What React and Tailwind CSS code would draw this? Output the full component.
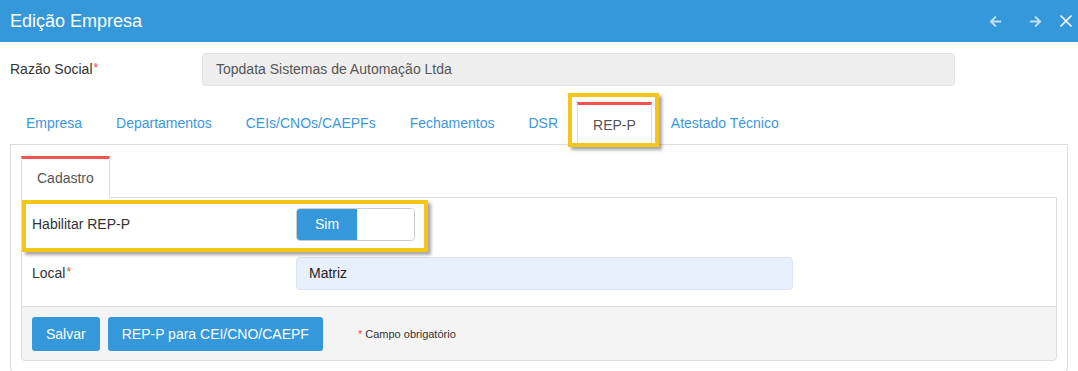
import { FaArrowLeft, FaArrowRight } from 'react-icons/fa';

const tabs = ['Empresa', 'Departamentos', 'CEIs/CNOs/CAEPFs', 'Fechamentos', 'DSR', 'REP-P', 'Atestado Técnico'];

function Highlight({ className }) {
    return (
        <div className={`absolute border-[4px] border-[#f5c518] shadow-[3px_3px_3px_rgba(0,0,0,0.35)] pointer-events-none ${className}`} />
    );
}

export default function App() {
    return (
        <div className="w-[1078px] h-[371px] bg-white overflow-hidden font-['Liberation_Sans',Arial,sans-serif] text-[14px] text-[#333]">
            {/* cabeçalho */}
            <div className="h-[42px] bg-[#3498db] flex items-center justify-between pl-[10px] pr-[6px]">
                <h1 className="text-[18px] text-white">Edição Empresa</h1>
                <div className="flex items-center text-white">
                    <FaArrowLeft size={13} className="opacity-70" />
                    <FaArrowRight size={13} className="opacity-70 ml-[27px]" />
                    <svg width="12" height="12" viewBox="0 0 12 12" className="ml-[18px]">
                        <path d="M1 1 L11 11 M11 1 L1 11" stroke="white" strokeWidth="1.6" strokeLinecap="round" />
                    </svg>
                </div>
            </div>

            {/* razão social */}
            <div className="flex items-center mt-[11px]">
                <label className="w-[202px] pl-[10px]">
                    Razão Social<span className="text-[#e74c3c] text-[12px] align-top ml-[1px]">*</span>
                </label>
                <div className="w-[753px] h-[33px] flex items-center px-[13px] bg-[#eee] border border-[#e2e2e2] rounded-[4px] text-[#555]">
                    Topdata Sistemas de Automação Ltda
                </div>
            </div>

            {/* abas */}
            <div className="mt-[16px] mx-[10px] flex border-b border-[#ddd] pl-[1px]">
                {tabs.map((t) =>
                    t === 'REP-P' ? (
                        <div key={t} className="relative mr-[4px] -mb-px h-[43px] px-[15px] flex items-center bg-white border-x border-[#ddd] border-t-[3px] border-t-[#ef5350] text-[#555]">
                            {t}
                            <Highlight className="-left-[10px] -top-[12px] -right-[8px] -bottom-[2px]" />
                        </div>
                    ) : (
                        <div key={t} className="mr-[4px] h-[42px] px-[15px] flex items-center text-[#3b97de]">
                            {t}
                        </div>
                    )
                )}
            </div>

            {/* painel */}
            <div className="mx-[10px] border-x border-b border-[#ddd] rounded-b-[4px] pt-[11px] px-[10px] pb-[10px]">
                <div className="flex border-b border-[#ddd]">
                    <div className="-mb-px h-[42px] px-[15px] flex items-center bg-white border-x border-[#ddd] border-t-[3px] border-t-[#ef5350] text-[#555]">
                        Cadastro
                    </div>
                </div>

                <div className="relative border-x border-[#ddd] pt-[10px] pb-[16px] px-[10px] flex flex-col gap-[16px]">
                    <div className="flex items-center h-[33px]">
                        <label className="w-[264px]">Habilitar REP-P</label>
                        <div className="w-[119px] h-[33px] flex border border-[#ccc] rounded-[4px] overflow-hidden">
                            <div className="w-[60px] bg-[#3498db] text-white flex items-center justify-center">Sim</div>
                            <div className="flex-1 bg-white" />
                        </div>
                    </div>
                    <Highlight className="left-0 top-[2px] w-[406px] h-[52px]" />

                    <div className="flex items-center h-[33px]">
                        <label className="w-[264px]">
                            Local<span className="text-[#e74c3c] text-[12px] align-top ml-[1px]">*</span>
                        </label>
                        <div className="w-[497px] h-[33px] flex items-center px-[12px] bg-[#e8f0fe] border border-[#dde4ee] rounded-[4px] text-[#222]">
                            Matriz
                        </div>
                    </div>
                </div>

                <div className="flex items-center bg-[#f4f4f4] border border-[#ddd] rounded-b-[4px] pt-[10px] pb-[9px] px-[10px]">
                    <button className="h-[34px] px-[14px] bg-[#3498db] text-white rounded-[3px]">Salvar</button>
                    <button className="ml-[8px] h-[34px] px-[14px] bg-[#3498db] text-white rounded-[3px]">REP-P para CEI/CNO/CAEPF</button>
                    <span className="ml-[35px] text-[11px] text-[#333]">
                        <span className="text-[#e74c3c]">*</span> Campo obrigatório
                    </span>
                </div>
            </div>
        </div>
    );
}
